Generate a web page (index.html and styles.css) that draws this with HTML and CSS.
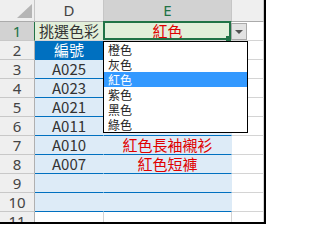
FILE: index.html
```html
<!DOCTYPE html>
<html>
<head>
<meta charset="utf-8">
<link rel="stylesheet" href="styles.css">
</head>
<body>
<div class="frame">
  <div class="sheet">
    <div class="c corner"><svg class="tri" width="35" height="22" viewBox="0 0 35 22"><polygon points="17,18 32,18 32,4" fill="#b5b5b5"/></svg></div>
    <div class="c ch">D</div>
    <div class="c ch sel">E</div>
    <div class="c ch"></div>

    <div class="c rh sel">1</div>
    <div class="c pick">挑選色彩</div>
    <div class="c pick active red">紅色<span class="handle"></span><span class="ddbtn"><svg width="8" height="4" viewBox="0 0 8 4"><polygon points="0,0 8,0 4,4" fill="#555"/></svg></span></div>
    <div class="c"></div>

    <div class="c rh">2</div>
    <div class="c thead">編號</div>
    <div class="c thead e"></div>
    <div class="c"></div>

    <div class="c rh">3</div>
    <div class="c t">A025</div>
    <div class="c t e"></div>
    <div class="c"></div>

    <div class="c rh">4</div>
    <div class="c t">A023</div>
    <div class="c t e"></div>
    <div class="c"></div>

    <div class="c rh">5</div>
    <div class="c t">A021</div>
    <div class="c t e"></div>
    <div class="c"></div>

    <div class="c rh">6</div>
    <div class="c t">A011</div>
    <div class="c t e"></div>
    <div class="c"></div>

    <div class="c rh">7</div>
    <div class="c t">A010</div>
    <div class="c t e red">紅色長袖襯衫</div>
    <div class="c"></div>

    <div class="c rh">8</div>
    <div class="c t">A007</div>
    <div class="c t e red">紅色短褲</div>
    <div class="c"></div>

    <div class="c rh">9</div>
    <div class="c t"></div>
    <div class="c t e"></div>
    <div class="c"></div>

    <div class="c rh">10</div>
    <div class="c t"></div>
    <div class="c t e"></div>
    <div class="c"></div>

    <div class="c rh">11</div>
    <div class="c"></div>
    <div class="c"></div>
    <div class="c"></div>
  </div>

  <ul class="ddlist">
    <li>橙色</li>
    <li>灰色</li>
    <li class="hl">紅色</li>
    <li>紫色</li>
    <li>黑色</li>
    <li>綠色</li>
  </ul>
</div>
</body>
</html>
```

FILE: styles.css
```css
body {
  margin: 0;
  background: #fff;
}

.frame {
  position: relative;
  width: 266px;
  height: 224px;
  box-sizing: border-box;
  border-right: 2px solid #000;
  border-bottom: 2px solid #000;
  overflow: hidden;
  background: #fff;
}

.sheet {
  display: grid;
  grid-template-columns: 35px 69px 128px 32px;
  grid-template-rows: 22px repeat(11, 19px);
}

.c {
  box-sizing: border-box;
  border-right: 1px solid #d4d4d4;
  border-bottom: 1px solid #d4d4d4;
  font-family: "Noto Sans CJK TC", sans-serif;
  font-size: 15px;
  line-height: 18px;
  text-align: center;
  color: #333;
  white-space: nowrap;
}

.corner {
  background: #efefef;
  border-right-color: #c6c6c6;
  border-bottom-color: #ababab;
  position: relative;
}

.tri {
  display: block;
}

.ch {
  background: #efefef;
  border-right-color: #c6c6c6;
  border-bottom-color: #ababab;
  font-family: "Noto Sans", sans-serif;
  font-size: 15px;
  line-height: 21px;
  color: #444;
}

.ch.sel {
  background: #d2d2d2;
  color: #217346;
  border-bottom: 1px solid #217346;
}

.rh {
  background: #efefef;
  border-right-color: #b0b0b0;
  border-bottom-color: #c8c8c8;
  font-family: "Noto Sans", sans-serif;
  font-size: 15px;
  color: #444;
}

.rh.sel {
  background: #d2d2d2;
  color: #217346;
  border-right: 1px solid #217346;
}

.pick {
  background: #e2efda;
}

.red {
  color: #e00000;
}

.active {
  position: relative;
  overflow: visible;
}

.active::after {
  content: "";
  position: absolute;
  left: -1px;
  top: -1px;
  right: 0;
  bottom: 0;
  border: 2px solid #217346;
}

.handle {
  position: absolute;
  right: 0;
  bottom: -1px;
  width: 5px;
  height: 5px;
  background: #217346;
  z-index: 2;
}

.ddbtn {
  position: absolute;
  left: 100%;
  top: 1px;
  width: 16px;
  height: 17px;
  box-sizing: border-box;
  border: 1px solid #a9a9a9;
  background: #e3e3e3;
  display: flex;
  align-items: center;
  justify-content: center;
  z-index: 2;
}

.thead {
  background: #0070c0;
  color: #fff;
  border-right-color: #0070c0;
  border-bottom-color: #0070c0;
}

.t {
  background: #ddebf7;
  border-right-color: #ddebf7;
  border-bottom-color: #0070c0;
}

.t.e {
  border-right-color: #ddebf7;
}

.ddlist {
  position: absolute;
  left: 103px;
  top: 41px;
  width: 145px;
  height: 92px;
  box-sizing: border-box;
  margin: 0;
  padding: 0;
  list-style: none;
  border: 1px solid #000;
  background: #fff;
  z-index: 3;
}

.ddlist li {
  height: 15px;
  padding-left: 4px;
  font-family: "Noto Sans CJK TC", sans-serif;
  font-size: 12px;
  line-height: 15px;
  color: #222;
}

.ddlist li.hl {
  background: #3399ff;
  color: #fff;
}
```
